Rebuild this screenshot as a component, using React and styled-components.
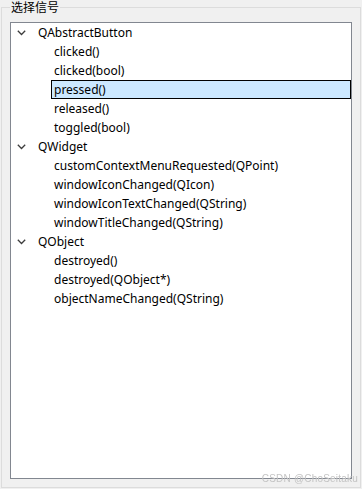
import React from "react";
import styled, { createGlobalStyle } from "styled-components";

const Global = createGlobalStyle`
  html, body { margin: 0; padding: 0; background: #f0f0f0; }
  body { width: 362px; height: 489px; overflow: hidden; }
  * { box-sizing: border-box; }
`;

const Page = styled.div`
  position: relative;
  width: 362px;
  height: 489px;
  padding: 1px 1px 1px 1px;
  font-family: "Noto Sans", "Noto Sans CJK SC", sans-serif;
  font-size: 12px;
  color: #000;
`;

const Group = styled.fieldset`
  margin: 0;
  width: 360px;
  height: 487px;
  border: 1px solid #dcdcdc;
  padding: 9px 8px 8px 8px;
  display: flex;
  flex-direction: column;
`;

const Legend = styled.legend`
  margin-left: 0;
  padding: 0 1px;
  font-family: "Noto Sans CJK SC", sans-serif;
  font-size: 12px;
  line-height: 12px;
  color: #000;
`;

const Tree = styled.div`
  flex: 1;
  border: 1px solid #828790;
  background: #fff;
  display: flex;
  flex-direction: column;
`;

const Row = styled.div`
  height: 19px;
  display: flex;
  align-items: center;
  padding-left: ${(p) => (p.$child ? 40 : 6)}px;
`;

const Arrow = styled.svg`
  width: 9px;
  height: 6px;
  margin-right: 9px;
  flex: none;
`;

const Label = styled.span`
  flex: 1;
  height: 19px;
  line-height: 17px;
  padding-left: 2px;
  white-space: nowrap;
  border: 1px solid ${(p) => (p.$selected ? "#000" : "transparent")};
  background: ${(p) => (p.$selected ? "#cce8ff" : "transparent")};
`;

const Watermark = styled.div`
  position: absolute;
  right: 4px;
  bottom: 5px;
  font-family: "Liberation Sans", sans-serif;
  font-size: 10px;
  color: #c4c4c4;
  filter: blur(0.4px);
  letter-spacing: 0.2px;
`;

const data = [
  { name: "QAbstractButton", items: ["clicked()", "clicked(bool)", "pressed()", "released()", "toggled(bool)"] },
  { name: "QWidget", items: ["customContextMenuRequested(QPoint)", "windowIconChanged(QIcon)", "windowIconTextChanged(QString)", "windowTitleChanged(QString)"] },
  { name: "QObject", items: ["destroyed()", "destroyed(QObject*)", "objectNameChanged(QString)"] },
];

const Chevron = () => (
  <Arrow viewBox="0 0 9 6">
    <path d="M0.8 0.8 L4.5 4.5 L8.2 0.8" fill="none" stroke="#3c3c3c" strokeWidth="1.3" />
  </Arrow>
);

export default function App() {
  return (
    <Page>
      <Global />
      <Group>
        <Legend>选择信号</Legend>
        <Tree>
          {data.map((g) => (
            <React.Fragment key={g.name}>
              <Row>
                <Chevron />
                <Label>{g.name}</Label>
              </Row>
              {g.items.map((it) => (
                <Row $child key={it}>
                  <Label $selected={it === "pressed()"}>{it}</Label>
                </Row>
              ))}
            </React.Fragment>
          ))}
        </Tree>
      </Group>
      <Watermark>CSDN @ChoSeitaku</Watermark>
    </Page>
  );
}
